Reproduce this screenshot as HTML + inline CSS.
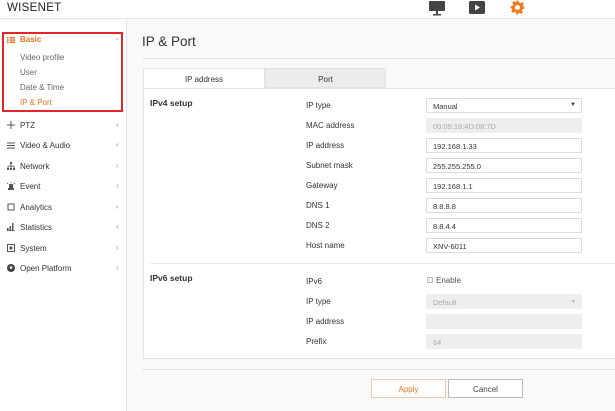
<!DOCTYPE html><html><head><style>
*{margin:0;padding:0;box-sizing:border-box}
body{width:615px;height:411px;overflow:hidden;background:#f9f9f9;font-family:"Liberation Sans",sans-serif;color:#333;position:relative}
.a{position:absolute}
.lbl{font-size:8px;color:#333}
.f{position:absolute;left:426px;width:156px;height:15px;border:1px solid #ddd;background:#fff;font-size:7.5px;padding:3px 6px;color:#333}
.f.d{background:#eeeeee;border-color:#eee;color:#aaa}
.nt{position:absolute;left:20px;font-size:8px;color:#333}
.ic{position:absolute;left:7px}
.chev{position:absolute;left:116px;font-size:8px;color:#999}
.sub{position:absolute;left:20px;font-size:8px;color:#666}
</style></head><body>
<div class="a" style="left:0;top:0;width:615px;height:19px;background:#fff;border-bottom:1px solid #e5e5e5"></div>
<div class="a" style="left:7px;top:2px;font-size:11.5px;letter-spacing:0.3px;color:#222">WISENET</div>
<svg class="a" style="left:429px;top:1px" width="16" height="15"><rect x="0" y="0" width="16" height="10" rx="1" fill="#444"/><rect x="7" y="10" width="2" height="3" fill="#444"/><rect x="4" y="13" width="8" height="1.5" fill="#444"/></svg>
<svg class="a" style="left:469px;top:1px" width="16" height="14"><rect width="16" height="13" rx="1.5" fill="#444"/><path d="M6 3.5 L11 6.5 L6 9.5Z" fill="#fff"/></svg>
<svg class="a" style="left:510px;top:0px" width="15" height="15" viewBox="0 0 24 24"><path fill="#f07a1c" d="M10 1h4l.6 3.2 2.2 1 2.7-1.9 2.8 2.8-1.9 2.7 1 2.2L23 10v4l-3.2.6-1 2.2 1.9 2.7-2.8 2.8-2.7-1.9-2.2 1L14 23h-4l-.6-3.2-2.2-1-2.7 1.9-2.8-2.8 1.9-2.7-1-2.2L1 14v-4l3.2-.6 1-2.2-1.9-2.7 2.8-2.8 2.7 1.9 2.2-1z"/><circle cx="12" cy="12" r="4" fill="#fff"/></svg>
<div class="a" style="left:0;top:20px;width:127px;height:391px;background:#fff;border-right:1px solid #e3e3e3"></div>
<div class="a" style="left:2px;top:32px;width:121px;height:80px;border:2px solid #e3262b"></div>
<svg class="a" style="left:7px;top:37px" width="8" height="6"><rect width="1.5" height="1.5" y="0" fill="#e8751f"/><rect x="2.5" width="5.5" height="1.5" fill="#e8751f"/><rect y="2.3" width="1.5" height="1.5" fill="#e8751f"/><rect x="2.5" y="2.3" width="5.5" height="1.5" fill="#e8751f"/><rect y="4.5" width="1.5" height="1.5" fill="#e8751f"/><rect x="2.5" y="4.5" width="5.5" height="1.5" fill="#e8751f"/></svg>
<div class="a" style="left:20px;top:35px;font-size:8px;font-weight:bold;color:#e8751f">Basic</div>
<div class="a" style="left:114px;top:34px;font-size:7px;color:#aaa">&#8964;</div>
<div class="sub" style="top:53px">Video profile</div>
<div class="sub" style="top:68px">User</div>
<div class="sub" style="top:83px">Date &amp; Time</div>
<div class="sub" style="top:98px;color:#e8751f">IP &amp; Port</div>

<svg class="ic" style="top:121px" width="8" height="8"><path d="M4 0v8M0 4h8" stroke="#555" stroke-width="1"/></svg>
<div class="nt" style="top:121px">PTZ</div><div class="chev" style="top:120px">‹</div>
<svg class="ic" style="top:142px" width="8" height="7"><path d="M0 1h8M0 3.5h8M0 6h8" stroke="#555" stroke-width="1"/></svg>
<div class="nt" style="top:141px">Video &amp; Audio</div><div class="chev" style="top:140px">‹</div>
<svg class="ic" style="top:162px" width="8" height="8"><rect x="3" y="0" width="2" height="2" fill="#555"/><path d="M4 2v2M1 4h6M1 4v2M4 4v2M7 4v2" stroke="#555" stroke-width="0.8" fill="none"/><rect x="0" y="6" width="2" height="2" fill="#555"/><rect x="3" y="6" width="2" height="2" fill="#555"/><rect x="6" y="6" width="2" height="2" fill="#555"/></svg>
<div class="nt" style="top:162px">Network</div><div class="chev" style="top:161px">‹</div>
<svg class="ic" style="top:182px" width="8" height="8"><path d="M2 2h4v4H2z M1 6h6v2H1z" fill="#555"/><path d="M0 1l1 1M8 1l-1 1M4 0v1" stroke="#555" stroke-width="0.8"/></svg>
<div class="nt" style="top:182px">Event</div><div class="chev" style="top:181px">‹</div>
<svg class="ic" style="top:203px" width="8" height="8"><rect x="1" y="1" width="6" height="6" fill="none" stroke="#555" stroke-width="1"/></svg>
<div class="nt" style="top:203px">Analytics</div><div class="chev" style="top:202px">‹</div>
<svg class="ic" style="top:223px" width="8" height="8"><rect x="0" y="5" width="1.5" height="3" fill="#555"/><rect x="2.5" y="3" width="1.5" height="5" fill="#555"/><rect x="5" y="0" width="1.5" height="8" fill="#555"/><rect x="0" y="7.3" width="8" height="0.7" fill="#555"/></svg>
<div class="nt" style="top:223px">Statistics</div><div class="chev" style="top:222px">‹</div>
<svg class="ic" style="top:244px" width="8" height="8"><rect x="0.5" y="0.5" width="7" height="7" fill="none" stroke="#555"/><rect x="2.5" y="2.5" width="3" height="3" fill="#555"/></svg>
<div class="nt" style="top:244px">System</div><div class="chev" style="top:243px">‹</div>
<svg class="ic" style="top:264px" width="8" height="8"><circle cx="4" cy="4" r="4" fill="#444"/><circle cx="4" cy="3.5" r="1.3" fill="#fff"/></svg>
<div class="nt" style="top:264px">Open Platform</div><div class="chev" style="top:263px">‹</div>

<div class="a" style="left:142px;top:34px;font-size:13.5px;color:#333">IP &amp; Port</div>
<div class="a" style="left:142px;top:58px;width:473px;height:1px;background:#e5e5e5"></div>
<div class="a" style="left:143px;top:68px;width:122px;height:21px;background:#fff;border:1px solid #e3e3e3;border-bottom:none;font-size:8px;text-align:center;padding-top:6px">IP address</div>
<div class="a" style="left:265px;top:68px;width:121px;height:20px;background:#ececec;border:1px solid #e3e3e3;font-size:8px;text-align:center;padding-top:6px">Port</div>
<div class="a" style="left:143px;top:88px;width:480px;height:271px;background:#fff;border:1px solid #e3e3e3"></div>
<div class="a" style="left:150px;top:263px;width:465px;height:1px;background:#eaeaea"></div>
<div class="a" style="left:150px;top:98px;font-size:8.5px;font-weight:bold">IPv4 setup</div>
<div class="a" style="left:150px;top:273px;font-size:8.5px;font-weight:bold">IPv6 setup</div>
<div class="a lbl" style="left:306px;top:101px">IP type</div>
<div class="a lbl" style="left:306px;top:121px">MAC address</div>
<div class="a lbl" style="left:306px;top:141px">IP address</div>
<div class="a lbl" style="left:306px;top:161px">Subnet mask</div>
<div class="a lbl" style="left:306px;top:181px">Gateway</div>
<div class="a lbl" style="left:306px;top:201px">DNS 1</div>
<div class="a lbl" style="left:306px;top:221px">DNS 2</div>
<div class="a lbl" style="left:306px;top:241px">Host name</div>
<div class="f" style="top:98px">Manual<span style="position:absolute;right:5px;font-size:6px;top:3px">▼</span></div>
<div class="f d" style="top:118px">00:09:18:4D:08:7D</div>
<div class="f" style="top:138px">192.168.1.33</div>
<div class="f" style="top:158px">255.255.255.0</div>
<div class="f" style="top:178px">192.168.1.1</div>
<div class="f" style="top:198px">8.8.8.8</div>
<div class="f" style="top:218px">8.8.4.4</div>
<div class="f" style="top:238px">XNV-6011</div>
<div class="a lbl" style="left:306px;top:277px">IPv6</div>
<div class="a lbl" style="left:306px;top:297px">IP type</div>
<div class="a lbl" style="left:306px;top:317px">IP address</div>
<div class="a lbl" style="left:306px;top:337px">Prefix</div>
<div class="a" style="left:427px;top:277px;width:6px;height:6px;border:1px solid #bbb;border-radius:1px;background:#f3f3f3"></div>
<div class="a lbl" style="left:436px;top:276px;color:#555">Enable</div>
<div class="f d" style="top:294px">Default<span style="position:absolute;right:5px;font-size:5px;top:4px">▼</span></div>
<div class="f d" style="top:314px"></div>
<div class="f d" style="top:334px">64</div>
<div class="a" style="left:142px;top:369px;width:473px;height:1px;background:#e5e5e5"></div>
<div class="a" style="left:371px;top:379px;width:75px;height:19px;border:1px solid #f0c9a8;background:#fff;color:#e8751f;font-size:8px;text-align:center;padding-top:5px">Apply</div>
<div class="a" style="left:448px;top:379px;width:75px;height:19px;border:1px solid #bbb;background:#fff;color:#444;font-size:8px;text-align:center;padding-top:5px">Cancel</div>
</body></html>
